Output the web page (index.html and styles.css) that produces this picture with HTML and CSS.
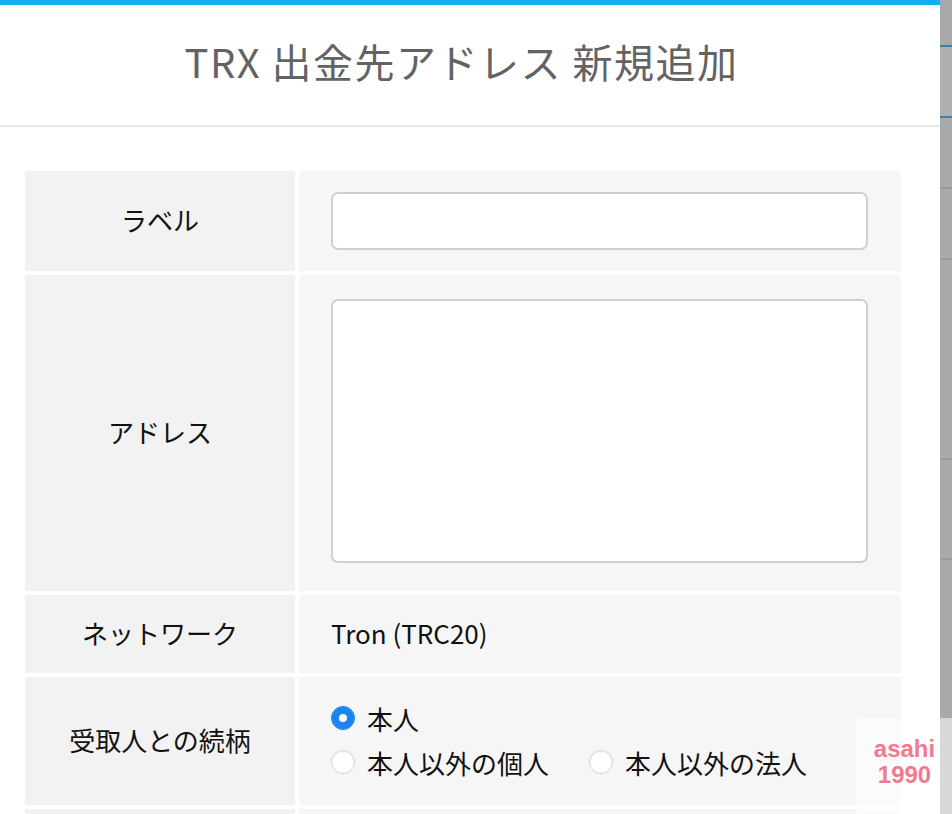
FILE: index.html
```html
<!DOCTYPE html>
<html lang="ja">
<head>
<meta charset="utf-8">
<title>TRX 出金先アドレス 新規追加</title>
<link rel="stylesheet" href="styles.css">
</head>
<body>
<div class="page">
  <div class="modal">
    <header class="modal-head">
      <h1 class="modal-title">TRX 出金先アドレス 新規追加</h1>
    </header>
    <div class="modal-body">
      <div class="form-grid">
        <div class="cell-label row-label">ラベル</div>
        <div class="cell-value row-label"><input class="text-input" type="text"></div>

        <div class="cell-label row-address">アドレス</div>
        <div class="cell-value row-address"><textarea class="text-area"></textarea></div>

        <div class="cell-label row-network">ネットワーク</div>
        <div class="cell-value row-network"><span class="plain-value">Tron (TRC20)</span></div>

        <div class="cell-label row-relation">受取人との続柄</div>
        <div class="cell-value row-relation">
          <div class="radio-group">
            <label class="radio-item"><span class="radio radio-checked"></span>本人</label>
            <div class="radio-line">
              <label class="radio-item"><span class="radio"></span>本人以外の個人</label>
              <label class="radio-item"><span class="radio"></span>本人以外の法人</label>
            </div>
          </div>
        </div>

        <div class="cell-label row-next"></div>
        <div class="cell-value row-next"></div>
      </div>
    </div>
  </div>
  <aside class="backdrop">
    <div class="bd-seg bd-top"></div>
    <div class="bd-seg bd-a"></div>
    <div class="bd-seg bd-b"></div>
    <div class="bd-seg bd-c"></div>
    <div class="bd-seg bd-d"></div>
    <div class="bd-seg bd-e"></div>
    <div class="bd-seg bd-f"></div>
  </aside>
  <div class="watermark">
    <span class="wm-line">asahi</span>
    <span class="wm-line">1990</span>
  </div>
</div>
</body>
</html>
```
FILE: styles.css
```css
* { box-sizing: border-box; }

html, body {
  margin: 0;
  padding: 0;
  height: 100%;
  overflow: hidden;
}

body {
  font-family: "Noto Sans CJK JP", "Noto Sans", sans-serif;
  background: #a9a9a9;
  color: #111;
}

.page {
  position: relative;
  display: flex;
  height: 814px;
}

.modal {
  width: 940px;
  flex: none;
  background: #fff;
  border-top: 5px solid #0fb0f0;
}

.modal-head {
  height: 122px;
  border-bottom: 2px solid #e6e6e6;
  display: flex;
  align-items: center;
  justify-content: center;
}

.modal-title {
  margin: 0;
  font-size: 40px;
  font-weight: 400;
  color: #636363;
  letter-spacing: 1.5px;
  padding-bottom: 8px;
  padding-right: 17px;
}

.modal-body {
  padding: 44px 39px 0 25px;
}

.form-grid {
  display: grid;
  grid-template-columns: 270px 602px;
  grid-template-rows: 100px 316px 78px 128px 40px;
  gap: 4px;
}

.cell-label {
  background: #f2f2f2;
  display: flex;
  align-items: center;
  justify-content: center;
  font-size: 26px;
  color: #111;
  padding-bottom: 3px;
}

.cell-value {
  background: #f6f6f6;
  display: flex;
  align-items: center;
  padding: 0 33px 0 32px;
}

.row-address.cell-value {
  align-items: flex-start;
  padding-top: 24px;
}

.text-input {
  width: 100%;
  height: 58px;
  border: 2px solid #cfcfcf;
  border-radius: 7px;
  background: #fff;
  font: inherit;
}

.text-area {
  width: 100%;
  height: 264px;
  border: 2px solid #cfcfcf;
  border-radius: 7px;
  background: #fff;
  resize: none;
  font: inherit;
}

.plain-value {
  font-size: 26px;
  color: #111;
  padding-bottom: 4px;
}

.radio-group {
  display: flex;
  flex-direction: column;
  font-size: 26px;
  color: #111;
  margin-top: -2px;
}

.radio-line {
  display: flex;
  gap: 40px;
}

.radio-item {
  display: flex;
  align-items: center;
  gap: 12px;
  height: 44px;
}

.radio {
  width: 24px;
  height: 24px;
  border-radius: 50%;
  background: #fff;
  border: 1px solid #d4d4d4;
  box-shadow: inset 0 1px 2px rgba(0, 0, 0, 0.08);
  flex: none;
}

.radio-checked {
  background: #1b84f0;
  border-color: #1b84f0;
  box-shadow: inset 0 0 0 7px #1b84f0, inset 0 0 0 12px #fff;
}

.backdrop {
  flex: 1;
  display: flex;
  flex-direction: column;
  background: #a9a9a9;
}

.bd-seg {
  border-bottom: 2px solid #9a9a9a;
}

.bd-top { height: 47px; border-bottom-color: #3d7fa8; }
.bd-a { height: 71px; border-bottom-color: #3d7fa8; background: #b0b0b0; }
.bd-b { height: 71px; }
.bd-c { height: 71px; }
.bd-d { height: 200px; }
.bd-e { height: 100px; }
.bd-f { flex: 1; border-bottom: 0; }

.watermark {
  position: absolute;
  left: 857px;
  top: 718px;
  width: 95px;
  height: 96px;
  background: rgba(255, 255, 255, 0.55);
  display: flex;
  flex-direction: column;
  align-items: center;
  padding: 18px 0 0 0;
  font-family: "Liberation Sans", Arial, sans-serif;
  font-weight: 700;
  font-size: 24px;
  line-height: 26px;
  color: #f07a90;
}
```
